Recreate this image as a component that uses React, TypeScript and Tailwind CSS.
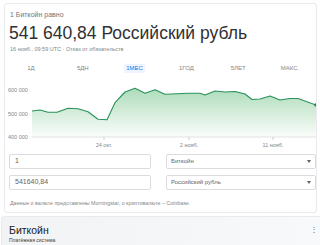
import React from 'react'

// ─── Data ────────────────────────────────────────────────────────────────────

const tabs = ['1Д', '5ДН', '1МЕС', '1ГОД', '5ЛЕТ', 'МАКС.']

// points in page coordinates (x, y)
const points: [number, number][] = [
  [32, 110], [40, 109], [48, 111.3], [57, 111.3], [68, 107.3], [78, 107.7], [88, 110.7],
  [98, 118.3], [107, 118.7], [115, 101.7], [125, 91], [135, 87.3], [145, 92.3], [155, 88.7],
  [165, 93.3], [177, 92.7], [188, 92.3], [200, 92.3], [205, 94], [215, 90], [225, 91],
  [235, 90.5], [245, 93], [252, 98.5], [260, 98], [270, 95], [280, 99], [290, 97.5],
  [298, 97.5], [316, 104],
]

// svg sits at page x=4, y=78
const OX = 4
const OY = 78

function Chart() {
  const pts = points.map(([x, y]) => [x - OX, y - OY])
  const line = pts.map(([x, y], i) => `${i ? 'L' : 'M'}${x} ${y}`).join(' ')
  const base = 136 - OY
  const area = `${line} L${pts[pts.length - 1][0]} ${base} L${pts[0][0]} ${base} Z`
  const last = pts[pts.length - 1]
  return (
    <svg width={312} height={72} className="block" style={{ fontFamily: '"Liberation Sans", Arial, sans-serif' }}>
      <defs>
        <linearGradient id="fill" x1="0" y1="0" x2="0" y2="1">
          <stop offset="0%" stopColor="#34a853" stopOpacity={0.4} />
          <stop offset="100%" stopColor="#34a853" stopOpacity={0.02} />
        </linearGradient>
      </defs>
      <text x={4} y={89 - OY + 2} fontSize={5.5} fill="#80868b">600 000</text>
      <text x={4} y={113 - OY + 2} fontSize={5.5} fill="#80868b">500 000</text>
      <text x={4} y={136 - OY + 2} fontSize={5.5} fill="#80868b">400 000</text>
      <line x1={28} y1={base} x2={314} y2={base} stroke="#dadce0" strokeWidth={0.8} />
      {[104, 189, 273].map((x) => (
        <line key={x} x1={x - OX} y1={base} x2={x - OX} y2={base + 3} stroke="#bdc1c6" strokeWidth={0.8} />
      ))}
      <path d={area} fill="url(#fill)" />
      <path d={line} fill="none" stroke="#27925a" strokeWidth={1.1} strokeLinejoin="round" />
      <circle cx={last[0]} cy={last[1]} r={1.8} fill="#1e8e3e" />
      <text x={104 - OX} y={146 - OY} fontSize={5.5} fill="#80868b" textAnchor="middle">24 окт.</text>
      <text x={189 - OX} y={146 - OY} fontSize={5.5} fill="#80868b" textAnchor="middle">2 нояб.</text>
      <text x={273 - OX} y={146 - OY} fontSize={5.5} fill="#80868b" textAnchor="middle">11 нояб.</text>
    </svg>
  )
}

function Field({ value }: { value: string }) {
  return (
    <div className="h-[15px] w-[142px] rounded-[2px] border border-[#dadce0] px-[5px] flex items-center text-[7px] text-[#5f6368]">
      {value}
    </div>
  )
}

function SelectBox({ value }: { value: string }) {
  return (
    <div className="h-[15px] w-[150px] rounded-[2px] border border-[#dadce0] pl-[4px] pr-[4px] flex items-center justify-between text-[6px] text-[#5f6368]">
      <span>{value}</span>
      <span className="w-0 h-0 border-l-[2.5px] border-r-[2.5px] border-t-[3px] border-l-transparent border-r-transparent border-t-[#5f6368]" />
    </div>
  )
}

// ─── Page ────────────────────────────────────────────────────────────────────

export default function App() {
  return (
    <div
      className="w-[320px] h-[245px] overflow-hidden bg-white"
      style={{ fontFamily: '"Liberation Sans", Arial, sans-serif' }}
    >
      <div className="ml-[4px] mt-[3px] w-[313px] h-[210px] rounded-[3px] border border-[#e8eaed] bg-white flex flex-col">
        <div className="h-[18px] pl-[5px] pt-[7px] text-[7px] leading-[8px] text-[#70757a]">1 Биткойн равно</div>
        <div className="h-[22px] pl-[4px] text-[17.5px] leading-[22px] text-[#303134]">541 640,84 Российский рубль</div>
        <div className="h-[14px] pl-[5px] pt-[2px] text-[5.5px] leading-[7px] text-[#80868b]">
          16 нояб., 09:59 UTC · Отказ от обязательств
        </div>
        <div className="h-[20px] flex items-center">
          {tabs.map((t) => (
            <div key={t} className="flex-1 flex justify-center">
              <span
                className={
                  t === '1МЕС'
                    ? 'text-[6px] text-[#1a73e8] bg-[#eef3fd] rounded-[2px] px-[2px]'
                    : 'text-[6px] text-[#80868b]'
                }
              >
                {t}
              </span>
            </div>
          ))}
        </div>
        <div className="-ml-[1px] mt-[1px]">
          <Chart />
        </div>
        <div className="mt-[3px] flex flex-col gap-[6px] pl-[4px]">
          <div className="flex gap-[15px]">
            <Field value="1" />
            <SelectBox value="Биткойн" />
          </div>
          <div className="flex gap-[15px]">
            <Field value="541640,84" />
            <SelectBox value="Российский рубль" />
          </div>
        </div>
        <div className="pl-[5px] mt-[10px] text-[5.3px] text-[#80868b]">
          Данные о валюте представлены Morningstar, о криптовалюте – Coinbase.
        </div>
      </div>
      <div className="ml-[1px] mt-[3px] w-[322px] h-[40px] rounded-[3px] border border-[#e8eaed] bg-gradient-to-r from-[#f1f3f4] to-[#f8f9fa] px-[7px] pt-[7px] relative">
        <div className="text-[10.5px] leading-[12px] text-[#202124]">Биткойн</div>
        <div className="text-[5px] leading-[8px] text-[#3c4043]">Платёжная система</div>
        <span className="absolute right-[4px] top-[7px] text-[8px] text-[#5f6368]">⋮</span>
      </div>
    </div>
  )
}
